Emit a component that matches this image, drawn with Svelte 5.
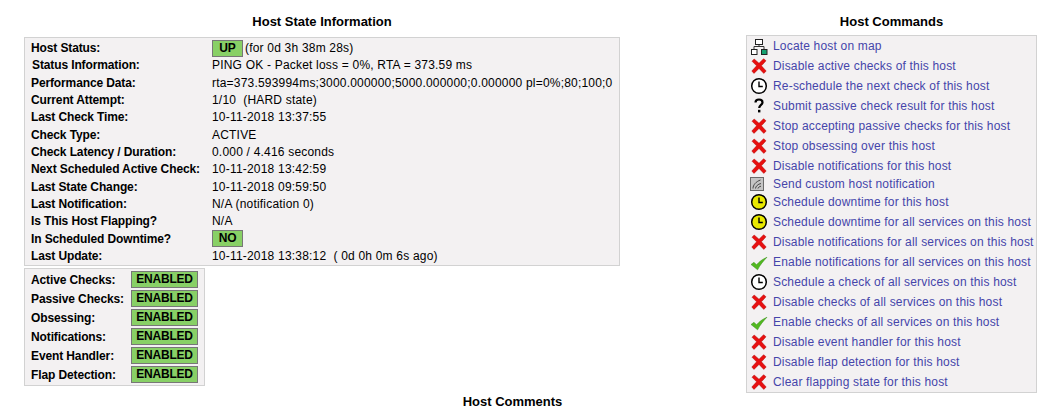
<script>
  const states = [
    ['Host Status:', 'up'],
    ['Status Information:', 'PING OK - Packet loss = 0%, RTA = 373.59 ms', 'shift'],
    ['Performance Data:', 'rta=373.593994ms;3000.000000;5000.000000;0.000000 pl=0%;80;100;0'],
    ['Current Attempt:', '1/10  (HARD state)'],
    ['Last Check Time:', '10-11-2018 13:37:55'],
    ['Check Type:', 'ACTIVE'],
    ['Check Latency / Duration:', '0.000 / 4.416 seconds'],
    ['Next Scheduled Active Check:', '10-11-2018 13:42:59'],
    ['Last State Change:', '10-11-2018 09:59:50'],
    ['Last Notification:', 'N/A (notification 0)'],
    ['Is This Host Flapping?', 'N/A'],
    ['In Scheduled Downtime?', 'no'],
    ['Last Update:', '10-11-2018 13:38:12  ( 0d 0h 0m 6s ago)']
  ];
  const checks = ['Active Checks:', 'Passive Checks:', 'Obsessing:', 'Notifications:', 'Event Handler:', 'Flap Detection:'];
  const commands = [
    ['map', 'Locate host on map'],
    ['x', 'Disable active checks of this host'],
    ['clock', 'Re-schedule the next check of this host'],
    ['q', 'Submit passive check result for this host'],
    ['x', 'Stop accepting passive checks for this host'],
    ['x', 'Stop obsessing over this host'],
    ['x', 'Disable notifications for this host'],
    ['notify', 'Send custom host notification'],
    ['down', 'Schedule downtime for this host'],
    ['down', 'Schedule downtime for all services on this host'],
    ['x', 'Disable notifications for all services on this host'],
    ['check', 'Enable notifications for all services on this host'],
    ['clock', 'Schedule a check of all services on this host'],
    ['x', 'Disable checks of all services on this host'],
    ['check', 'Enable checks of all services on this host'],
    ['x', 'Disable event handler for this host'],
    ['x', 'Disable flap detection for this host'],
    ['x', 'Clear flapping state for this host']
  ];
</script>

<div class="page">
  <section class="left">
    <h2>Host State Information</h2>
    <div class="box state">
      {#each states as [label, value, mod]}
        <div class="state-row">
          <span class="label" class:shift={mod === 'shift'}>{label}</span>
          {#if value === 'up'}
            <span class="value"><span class="badge up">UP</span>(for 0d 3h 38m 28s)</span>
          {:else if value === 'no'}
            <span class="value"><span class="badge up">NO</span></span>
          {:else}
            <span class="value">{value}</span>
          {/if}
        </div>
      {/each}
    </div>
    <div class="box checks">
      {#each checks as label}
        <span class="label">{label}</span>
        <span class="badge enabled">ENABLED</span>
      {/each}
    </div>
  </section>

  <section class="right">
    <h2>Host Commands</h2>
    <div class="box commands">
      {#each commands as [icon, text]}
        <div class="cmd" class:short={icon === 'notify'}>
          <span class="icon">
            {#if icon === 'x'}
              <svg width="20" height="20" viewBox="0 0 20 20"><path d="M3 5.2 5.2 3 10 7.3 14.6 2.7 17 4.8 12.4 9.8 17.2 15 14.8 17.4 10 12.4 5 17.4 2.8 15 7.6 9.8Z" fill="#e81010" stroke="#b00c0c" stroke-width=".5"/></svg>
            {:else if icon === 'clock' || icon === 'down'}
              <svg width="20" height="20" viewBox="0 0 20 20"><circle cx="10" cy="10" r="7.3" fill={icon === 'down' ? '#e8e800' : '#fff'} stroke="#000" stroke-width="1.5"/><path d="M10 5.5v5h3.8" fill="none" stroke="#000" stroke-width="1.4"/></svg>
            {:else if icon === 'check'}
              <svg width="20" height="20" viewBox="0 0 20 20"><path d="M2 12.5 5 10.3 7.5 12.8C10 9.8 13.5 7.2 18 5.2 14.5 8.8 11 13 8.6 17.8Z" fill="#52b820" stroke="#37901a" stroke-width=".5"/></svg>
            {:else if icon === 'map'}
              <svg width="20" height="20" viewBox="0 0 20 20"><path d="M10 8v2.5M5 13v-2.5h10V13" fill="none" stroke="#333"/><rect x="6.5" y="3.5" width="7" height="5" fill="#fff" stroke="#222"/><rect x="2.5" y="13.5" width="5.5" height="5" fill="#fff" stroke="#222"/><rect x="12.5" y="13.5" width="5.5" height="5" fill="#16a070" stroke="#222"/></svg>
            {:else if icon === 'q'}
              <svg width="20" height="20" viewBox="0 0 20 20"><path d="M6.5 6.5C6.5 4.5 8 3.5 10 3.5S13.5 4.7 13.5 6.4C13.5 8.8 10.2 9 10.2 12" fill="none" stroke="#000" stroke-width="2.2"/><rect x="9" y="13.8" width="2.4" height="2.6"/></svg>
            {:else}
              <svg class="notify" width="14" height="14" viewBox="0 0 14 14"><rect x=".5" y=".5" width="13" height="13" fill="#c4c4c4" stroke="#6a6a6a"/><path d="M3 11.5C3 8 6 4.5 10.5 3M5.5 11.5C5.5 9.5 8 7 11 6.5M8 11.5C8 10.5 9.5 9.5 11 9.2" fill="none" stroke="#444"/></svg>
            {/if}
          </span>
          <span class="cmd-text">{text}</span>
        </div>
      {/each}
    </div>
  </section>
</div>
<h2 class="comments">Host Comments</h2>

<style>
  :global(body) {
    margin: 0;
    background: #fff;
    color: #000;
    font-family: "Liberation Sans", Arial, sans-serif;
    font-size: 12px;
  }
  .page {
    display: flex;
    justify-content: space-between;
    padding: 14px 21px 0 24px;
  }
  h2 {
    margin: 0;
    font-size: 13px;
    line-height: 15px;
    font-weight: 700;
    text-align: center;
  }
  .left { width: 596px; }
  .box {
    background: #f3f1f2;
    border: 1px solid #d2d2d2;
    box-sizing: border-box;
  }
  .state {
    margin-top: 8px;
    width: 596px;
    height: 229px;
    padding: 1.4px 0 0 6px;
  }
  .state-row {
    display: flex;
    align-items: center;
    height: 17.33px;
  }
  .label { font-weight: 700; white-space: nowrap; letter-spacing: -.12px; }
  .state-row .label { width: 181px; flex: none; }
  .shift { padding-left: 1px; width: 180px !important; }
  .value { white-space: pre; display: flex; align-items: center; letter-spacing: .2px; }
  .badge {
    display: inline-block;
    box-sizing: border-box;
    background: #88d066;
    border: 1px solid #777;
    text-align: center;
    font-weight: 700;
    letter-spacing: -.2px;
  }
  .up { width: 31px; height: 17px; line-height: 15px; margin-right: 2px; }
  .checks {
    margin-top: 2px;
    width: 181px;
    height: 118px;
    display: grid;
    grid-template-columns: 100px 67px;
    grid-auto-rows: 19px;
    align-items: center;
    padding: 1px 0 0 6px;
  }
  .enabled { height: 17px; line-height: 15px; }
  .right { width: 291px; }
  .commands {
    margin-top: 6px;
    height: 358px;
  }
  .cmd {
    display: flex;
    align-items: center;
    height: 20px;
    white-space: nowrap;
  }
  .cmd.short { height: 16px; }
  .icon {
    width: 24px;
    margin-right: 2px;
    display: flex;
    justify-content: center;
    align-items: center;
    flex: none;
  }
  .icon svg { display: block; }
  .icon .notify { margin-right: 4px; }
  .cmd-text { color: #4545aa; letter-spacing: .18px; }
  .comments {
    width: 1025px;
    margin-top: 1px;
  }
</style>
